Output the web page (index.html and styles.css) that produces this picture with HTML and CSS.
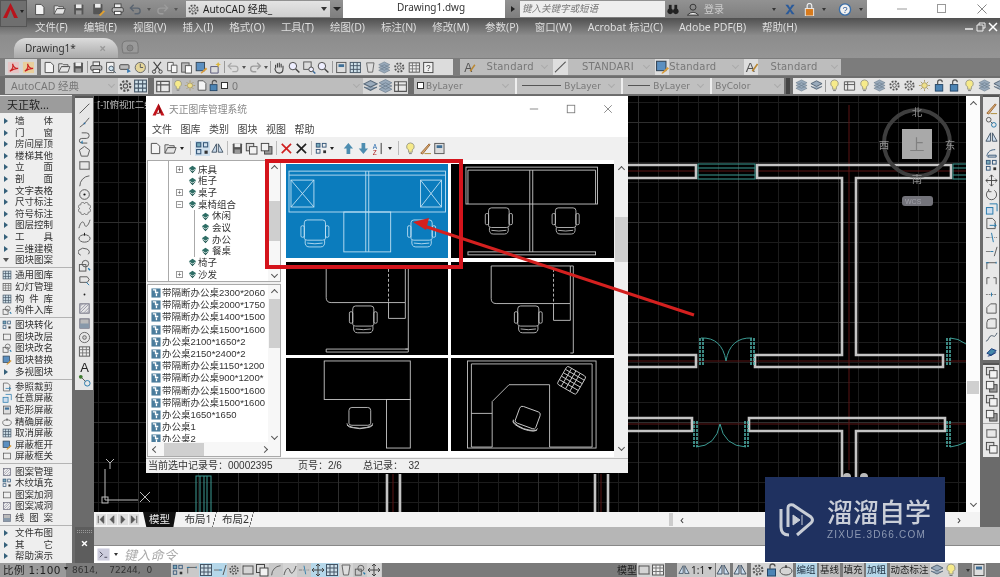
FILE: index.html
```html
<!DOCTYPE html>
<html lang="zh-CN">
<head>
<meta charset="utf-8">
<title>Drawing1.dwg</title>
<link rel="stylesheet" href="styles.css">
</head>
<body>
<svg class="defs" aria-hidden="true">
  <defs>
    <symbol id="new" viewBox="0 0 14 14"><path d="M2.500 1.500h6l3 3v8h-9z" fill="#f4f4f4" stroke="#4a4a4a"/></symbol>
    <symbol id="open" viewBox="0 0 14 14"><path d="M1 12V3h4l1 1h5v2H4l-3 6h10l2-6H4" fill="#e4e4e4" stroke="#555"/></symbol>
    <symbol id="save" viewBox="0 0 14 14"><rect x="2" y="1.500" width="10" height="11" rx="1" fill="#555"/><rect x="4" y="1.500" width="6" height="4" fill="#eee"/><rect x="4" y="8" width="6" height="4.500" fill="#999"/></symbol>
    <symbol id="saveas" viewBox="0 0 14 14"><rect x="1" y="1" width="10" height="11" rx="1" fill="#555"/><rect x="3" y="1" width="6" height="4" fill="#eee"/><path d="M7 13l5-5 2 1-5 5z" fill="#e0a030"/></symbol>
    <symbol id="print" viewBox="0 0 14 14"><rect x="3.500" y="1" width="7" height="4" fill="#eee" stroke="#444"/><rect x="1" y="5" width="12" height="5" rx="1.500" fill="#bbb" stroke="#444"/><rect x="3.500" y="9" width="7" height="3.500" fill="#fff" stroke="#444"/></symbol>
    <symbol id="undo" viewBox="0 0 14 14"><path d="M5 2L1.500 5.500 5 9M2 5.500h7a3 3 0 0 1 0 6H6" fill="none" stroke="#5a6470" stroke-width="1.500"/></symbol>
    <symbol id="redo" viewBox="0 0 14 14"><path d="M9 2l3.500 3.500L9 9m3-3.500H5a3 3 0 0 0 0 6h3" fill="none" stroke="#9c9c9c" stroke-width="1.500"/></symbol>
    <symbol id="undoF" viewBox="0 0 14 14"><path d="M5 2L1.500 5.500 5 9M2 5.500h7a3 3 0 0 1 0 6H6" fill="none" stroke="#a8a8a8" stroke-width="1.300"/></symbol>
    <symbol id="gear" viewBox="0 0 14 14"><circle cx="7" cy="7" r="4.500" fill="none" stroke="#555" stroke-width="2" stroke-dasharray="2 1.500"/><circle cx="7" cy="7" r="2" fill="none" stroke="#555"/></symbol>
    <symbol id="preview" viewBox="0 0 14 14"><path d="M3 1.500h8v11H3z" fill="#f4f4f4" stroke="#555"/><circle cx="8" cy="8" r="2.500" fill="#cfe3ee" stroke="#456"/><path d="M10 10l3 3" stroke="#456"/></symbol>
    <symbol id="plot" viewBox="0 0 14 14"><rect x="1" y="4" width="10" height="5" rx="1" fill="#bbb" stroke="#444"/><path d="M9 8l4 3-4 2z" fill="#3a7ab0"/></symbol>
    <symbol id="publish" viewBox="0 0 14 14"><circle cx="7" cy="7" r="5.500" fill="#e5d69a" stroke="#666"/><path d="M7 3v4h3" fill="none" stroke="#555"/></symbol>
    <symbol id="cut" viewBox="0 0 14 14"><path d="M3 1l7 9M11 1L4 10" stroke="#444" stroke-width="1.200"/><circle cx="3.500" cy="11.500" r="1.800" fill="none" stroke="#444"/><circle cx="10.500" cy="11.500" r="1.800" fill="none" stroke="#444"/></symbol>
    <symbol id="copy" viewBox="0 0 14 14"><path d="M2 1.500h6v9H2z" fill="#f5f5f5" stroke="#555"/><path d="M6 4.500h6v8H6z" fill="#f5f5f5" stroke="#555"/></symbol>
    <symbol id="paste" viewBox="0 0 14 14"><rect x="2" y="2" width="8" height="10" fill="#bbb" stroke="#555"/><rect x="6" y="5" width="6.500" height="8" fill="#fff" stroke="#555"/></symbol>
    <symbol id="match" viewBox="0 0 14 14"><rect x="1.500" y="1.500" width="9" height="9" fill="#5b8fc0" stroke="#345"/><path d="M6 13l6-6 1.500 1.500-6 5z" fill="#d89a38"/></symbol>
    <symbol id="match2" viewBox="0 0 14 14"><path d="M1 6h8v7H1z" fill="none" stroke="#557"/><path d="M9 1l1 2 2 .5-2 1L9 7 8 4.500 6 3.500 8 3z" fill="#dcb63a"/></symbol>
    <symbol id="pan" viewBox="0 0 14 14"><path d="M3 8V4m2 3V2.500m2 4.500V2m2 5V3m2 5V5m0 3c0 3-1 5-4 5S3.500 12 2 8" fill="none" stroke="#444" stroke-width="1.200"/></symbol>
    <symbol id="zoom" viewBox="0 0 14 14"><circle cx="5.500" cy="5.500" r="4" fill="#eef" stroke="#444"/><path d="M8.500 8.500l4 4" stroke="#444" stroke-width="1.500"/></symbol>
    <symbol id="zoomw" viewBox="0 0 14 14"><rect x="1" y="1" width="8" height="8" fill="none" stroke="#555"/><circle cx="9" cy="9" r="2.500" fill="#eef" stroke="#444"/><path d="M11 11l2.500 2.500" stroke="#3a6a9a" stroke-width="1.500"/></symbol>
    <symbol id="palette" viewBox="0 0 14 14"><rect x="2" y="1.500" width="10" height="11" fill="#ddd" stroke="#555"/><rect x="4" y="3.500" width="6" height="3" fill="#3f6f96"/></symbol>
    <symbol id="gridI" viewBox="0 0 14 14"><rect x="1.500" y="1.500" width="11" height="11" fill="#cfe1ea" stroke="#456"/><path d="M5 1.500v11M9 1.500v11M1.500 5h11M1.500 9h11" stroke="#456"/></symbol>
    <symbol id="cup" viewBox="0 0 14 14"><path d="M3 2h8l-1.500 10h-5z" fill="#ddd" stroke="#666"/></symbol>
    <symbol id="help" viewBox="0 0 14 14"><rect x="2" y="1.500" width="10" height="11" fill="#f0f0f0" stroke="#444"/><text x="7" y="11" font-size="9" text-anchor="middle" fill="#333" font-family="Liberation Sans">?</text></symbol>
    <symbol id="layers" viewBox="0 0 14 14"><path d="M1 5l6-3 6 3-6 3zM1 8l6 3 6-3" fill="#9ab" stroke="#567"/></symbol>
    <symbol id="bulb" viewBox="0 0 14 14"><path d="M7 1a4 4 0 0 1 2 7.500V11H5V8.500A4 4 0 0 1 7 1z" fill="#f6ea8a" stroke="#998"/><path d="M5.500 12.500h3" stroke="#777"/></symbol>
    <symbol id="sun" viewBox="0 0 14 14"><circle cx="7" cy="7" r="3" fill="#eee08a" stroke="#a96"/><path d="M7 1v2m0 8v2M1 7h2m8 0h2M3 3l1.500 1.500m5 5L11 11m0-8L9.500 4.500m-5 5L3 11" stroke="#a96"/></symbol>
    <symbol id="lock" viewBox="0 0 14 14"><rect x="2.500" y="6" width="8" height="7" fill="#4c84b4" stroke="#246"/><path d="M5 6V3.500a2.500 2.500 0 0 1 5 0" fill="none" stroke="#555" stroke-width="1.300"/></symbol>
    <symbol id="layer2" viewBox="0 0 14 14"><path d="M1.500 3h11v9h-11z" fill="#e8e8e8" stroke="#555"/><path d="M1.500 6h11M5 3v9" stroke="#555"/></symbol>
    <symbol id="line" viewBox="0 0 14 14"><path d="M2 12L12 2" stroke="#555"/><path d="M12 2h.1M2 12h.1" stroke="#111" stroke-width="2"/></symbol>
    <symbol id="pline" viewBox="0 0 14 14"><path d="M2 12l5-4 5-6" stroke="#555" fill="none"/><circle cx="7" cy="8" r="1" fill="#2a6aa0"/></symbol>
    <symbol id="rev" viewBox="0 0 14 14"><path d="M4 2h5a3 3 0 0 1 0 6H4a2.500 2.500 0 0 0 0 5h6" fill="none" stroke="#555"/><path d="M3 12l2-2v4z" fill="#27a"/></symbol>
    <symbol id="poly" viewBox="0 0 14 14"><path d="M7 1.500l5.500 4-2 6.500h-7l-2-6.500z" fill="none" stroke="#555"/></symbol>
    <symbol id="rect" viewBox="0 0 14 14"><rect x="2" y="3" width="10" height="8" fill="none" stroke="#555"/><path d="M2 3h.1m10 8h.1" stroke="#111" stroke-width="2"/></symbol>
    <symbol id="arc" viewBox="0 0 14 14"><path d="M2 13A11 11 0 0 1 12 2" fill="none" stroke="#555"/><path d="M2 13h.1M12 2h.1" stroke="#111" stroke-width="2"/></symbol>
    <symbol id="circle" viewBox="0 0 14 14"><circle cx="7" cy="7" r="5.200" fill="none" stroke="#555"/><circle cx="7" cy="7" r="1.200" fill="#111"/></symbol>
    <symbol id="cloud" viewBox="0 0 14 14"><path d="M3 3a2 2 0 0 1 4-1 2 2 0 0 1 4 1 2 2 0 0 1 1 4 2 2 0 0 1-1 4 2 2 0 0 1-4 1 2 2 0 0 1-4-1 2 2 0 0 1-1-4 2 2 0 0 1 1-4z" fill="none" stroke="#777"/></symbol>
    <symbol id="spline" viewBox="0 0 14 14"><path d="M1 12C3 4 6 4 7 8s4 2 6-5" fill="none" stroke="#555"/></symbol>
    <symbol id="ell" viewBox="0 0 14 14"><ellipse cx="7" cy="8" rx="6" ry="4" fill="none" stroke="#555"/><path d="M7 2v3" stroke="#111"/></symbol>
    <symbol id="ellarc" viewBox="0 0 14 14"><path d="M3 11A6 4 0 1 1 11 10" fill="none" stroke="#555"/></symbol>
    <symbol id="block" viewBox="0 0 14 14"><rect x="1.500" y="6" width="7" height="7" fill="none" stroke="#555"/><circle cx="8" cy="5" r="3.500" fill="none" stroke="#555"/><path d="M11 10l2 2" stroke="#27a" stroke-width="1.500"/></symbol>
    <symbol id="blockd" viewBox="0 0 14 14"><path d="M2 3h8l2 3-2 3H2z" fill="none" stroke="#555"/><path d="M9 9l3 3" stroke="#27a"/></symbol>
    <symbol id="dot" viewBox="0 0 14 14"><circle cx="7" cy="7" r="1" fill="#222"/></symbol>
    <symbol id="hatch" viewBox="0 0 14 14"><rect x="2" y="2" width="10" height="10" fill="none" stroke="#667"/><path d="M2 5l3-3m-3 7l7-7m-7 10l10-10m-6 10l6-6m-3 6l3-3" stroke="#99a"/></symbol>
    <symbol id="grad" viewBox="0 0 14 14"><rect x="2" y="2" width="10" height="10" fill="#bbb" stroke="#667"/><rect x="2" y="7" width="10" height="5" fill="#89a"/></symbol>
    <symbol id="region" viewBox="0 0 14 14"><circle cx="7" cy="7" r="5.500" fill="none" stroke="#666"/><circle cx="7" cy="7" r="2" fill="#ccc" stroke="#666"/></symbol>
    <symbol id="table" viewBox="0 0 14 14"><rect x="1.500" y="2" width="11" height="10" fill="#eee" stroke="#555"/><path d="M1.500 5h11m-11 3.500h11M5 2v10M9 2v10" stroke="#777"/></symbol>
    <symbol id="mtext" viewBox="0 0 14 14"><text x="7" y="13" font-size="14" text-anchor="middle" fill="#222" font-family="Liberation Sans">A</text></symbol>
    <symbol id="add" viewBox="0 0 14 14"><circle cx="3" cy="3" r="2" fill="#3b7a2a"/><circle cx="10" cy="10" r="3" fill="none" stroke="#27a"/><path d="M4 4l4 4" stroke="#555"/></symbol>
    <symbol id="erase" viewBox="0 0 14 14"><path d="M2 12l9-10 1 1-8 10z" fill="#d8ab75" stroke="#963"/><path d="M6 12.500h7" stroke="#a83"/></symbol>
    <symbol id="copyc" viewBox="0 0 14 14"><circle cx="4" cy="4" r="2.500" fill="none" stroke="#555"/><circle cx="9.500" cy="9.500" r="2.500" fill="none" stroke="#27a"/><path d="M6 6l2 2" stroke="#555"/></symbol>
    <symbol id="mirror" viewBox="0 0 14 14"><path d="M6 2L1 11h5zM8 2l5 9H8z" fill="#cde" stroke="#456"/></symbol>
    <symbol id="offset" viewBox="0 0 14 14"><path d="M2 12C3 7 6 5 11 5M3 13l1-2h8v2z" fill="none" stroke="#357"/></symbol>
    <symbol id="array" viewBox="0 0 14 14"><rect x="1.500" y="1.500" width="4" height="4" fill="#7ab" stroke="#357"/><rect x="8" y="1.500" width="4" height="4" fill="none" stroke="#357"/><rect x="1.500" y="8" width="4" height="4" fill="none" stroke="#357"/><rect x="9" y="9" width="3" height="3" fill="#333"/></symbol>
    <symbol id="move" viewBox="0 0 14 14"><path d="M7 1v12M1 7h12M5 3l2-2 2 2M5 11l2 2 2-2M3 5L1 7l2 2M11 5l2 2-2 2" fill="none" stroke="#444"/></symbol>
    <symbol id="rotate" viewBox="0 0 14 14"><path d="M4 2.500A5.500 5.500 0 1 0 10 2.500" fill="none" stroke="#555"/><path d="M4 1v3h3" fill="none" stroke="#555"/></symbol>
    <symbol id="scale" viewBox="0 0 14 14"><rect x="1.500" y="6" width="7" height="7" fill="#cde" stroke="#27a"/><path d="M5 2h8v8" fill="none" stroke="#27a"/></symbol>
    <symbol id="stretch" viewBox="0 0 14 14"><path d="M2 1.500h6l3 3v8H2z" fill="none" stroke="#555"/><path d="M5 9h7m-2-2l2 2-2 2" fill="none" stroke="#27a"/></symbol>
    <symbol id="trim" viewBox="0 0 14 14"><path d="M1 7h4m1 0h1" stroke="#777"/><path d="M7 2l2 10" stroke="#27a"/><path d="M10 7h3" stroke="#777" stroke-dasharray="1 1"/></symbol>
    <symbol id="extend" viewBox="0 0 14 14"><path d="M1 7h5" stroke="#777"/><path d="M6 7h3" stroke="#27a"/><path d="M10 12l3-10" stroke="#555"/></symbol>
    <symbol id="bp" viewBox="0 0 14 14"><path d="M2 11V4h10" fill="none" stroke="#555"/><path d="M1 4h3m8-1v2" stroke="#27a"/></symbol>
    <symbol id="brk" viewBox="0 0 14 14"><path d="M2 11V4h3m4 0h3v7" fill="none" stroke="#555"/></symbol>
    <symbol id="join" viewBox="0 0 14 14"><path d="M1 7h12" stroke="#777" stroke-dasharray="2 1"/><path d="M7 5v4" stroke="#27a"/></symbol>
    <symbol id="cham" viewBox="0 0 14 14"><path d="M2 12V6l4-4h6v10z" fill="none" stroke="#555"/></symbol>
    <symbol id="fillet" viewBox="0 0 14 14"><path d="M2 12V6a4 4 0 0 1 4-4h6v10z" fill="none" stroke="#555"/></symbol>
    <symbol id="blend" viewBox="0 0 14 14"><path d="M1 11c3 0 3-6 6-6s3 3 6-3" fill="none" stroke="#456"/></symbol>
    <symbol id="explode" viewBox="0 0 14 14"><path d="M2 9l5-5 5 2-5 5z" fill="#48a" stroke="#137"/><path d="M3 12l4-1 5-3" fill="none" stroke="#137"/></symbol>
    <symbol id="order" viewBox="0 0 14 14"><rect x="1.500" y="1.500" width="8" height="8" fill="#ddd" stroke="#444"/><rect x="5" y="5" width="8" height="8" fill="#f2f2f2" stroke="#444"/></symbol>
    <symbol id="order2" viewBox="0 0 14 14"><rect x="5" y="5" width="8" height="8" fill="#999" stroke="#444"/><rect x="1.500" y="1.500" width="8" height="8" fill="#f2f2f2" stroke="#444"/></symbol>
    <symbol id="pdf" viewBox="0 0 14 14"><rect x="1" y="1" width="12" height="12" fill="#e6c4c4"/><path d="M3 11c3-2 4-5 3-8 1 4 3 5 6 5-3 0-6 1-9 3z" fill="none" stroke="#c22" stroke-width="1.300"/></symbol>
    <symbol id="pdf2" viewBox="0 0 14 14"><rect x="1" y="1" width="12" height="12" fill="#e8cf9c"/><path d="M3 11c3-2 4-5 3-8 1 4 3 5 6 5-3 0-6 1-9 3z" fill="none" stroke="#c22" stroke-width="1.300"/></symbol>
    <symbol id="style" viewBox="0 0 14 14"><text x="6" y="12" font-size="13" text-anchor="middle" fill="#555" font-family="Liberation Sans">A</text><path d="M8 11l5-7" stroke="#b83" stroke-width="1.600"/></symbol>
    <symbol id="stack" viewBox="0 0 14 14"><path d="M1 10l6 3 6-3-6-3zM1 7l6 3 6-3-6-3zM1 4l6 3 6-3-6-3z" fill="#9ab" stroke="#678" stroke-width=".6"/></symbol>
    <symbol id="chair" viewBox="0 0 32 30"><path d="M5 4q0-3 3-3h16q3 0 3 3v16q0 2-3 2H8q-3 0-3-2z"/><rect x="1.500" y="7" width="3.500" height="12" rx="1.500"/><rect x="27" y="7" width="3.500" height="12" rx="1.500"/><path d="M6 22q-1 7 4 7h12q5 0 4-7M8 25q8 1.500 16 0"/></symbol>
    <symbol id="chair2" viewBox="0 0 30 26"><path d="M4 4q0-3 3-3h16q3 0 3 3v13q0 2-3 2H7q-3 0-3-2z"/><path d="M2 17q0 3 3 4 10 3 20 0 3-1 3-4M2 19q13 6 26 0"/></symbol>
    <symbol id="tri" viewBox="0 0 24 24"><path d="M12 1L1 23h6l5-11 5 11h6z" fill="#c4141c"/><path d="M12 1l6 17h-5zM9 18h5v2H9z" fill="#7c0c10"/></symbol>
    <symbol id="tI" viewBox="0 0 11 11"><rect x=".5" y=".5" width="10" height="10" fill="#4a7c9c"/><path d="M2 2h3v3h3" fill="none" stroke="#fff" stroke-width="1.500"/><path d="M6 6v3" stroke="#fff" stroke-width="1.500"/></symbol>
    <symbol id="cube" viewBox="0 0 11 11"><path d="M5.500 1l4.500 3-4.500 3L1 4z" fill="#2f6e66"/><path d="M1 5l4.500 5L10 5 5.500 8z" fill="#0f4a44"/></symbol>
  </defs>
</svg>

<div class="app">
  <header class="titlebar">
    <span class="appcaret"></span>
    <div class="qat">
      <svg class="ic w19"><use href="#new"/></svg><svg class="ic w19"><use href="#open"/></svg><svg class="ic w19"><use href="#save"/></svg><svg class="ic w19"><use href="#saveas"/></svg><svg class="ic w19"><use href="#print"/></svg><svg class="ic w15"><use href="#undo"/></svg><span class="caret w13"></span><svg class="ic w15"><use href="#redo"/></svg><span class="caret w13"></span>
    </div>
    <div class="wscombo"><svg class="ic w15"><use href="#gear"/></svg><span>AutoCAD 经典_</span><span class="combo-arrow"></span></div>
    <div class="qatmore"><span class="caret light"></span></div>
    <div class="doctitle">Drawing1.dwg</div>
    <div class="infocenter">
      <span class="tri-r"></span>
      <div class="search">键入关键字或短语</div>
      <svg class="ic w14 bino" viewBox="0 0 14 14"><circle cx="4" cy="9" r="3" fill="#222"/><circle cx="10" cy="9" r="3" fill="#222"/><rect x="2.500" y="2" width="3" height="6" fill="#222"/><rect x="8.500" y="2" width="3" height="6" fill="#222"/></svg>
      <svg class="ic w18" viewBox="0 0 14 14"><circle cx="7" cy="4.500" r="3.200" fill="none" stroke="#333"/><path d="M1 13q6-6 12 0z" fill="#eee" stroke="#333"/></svg>
      <span class="login">登录</span>
      <span class="caret dark"></span>
      <svg class="ic w20" viewBox="0 0 14 14"><path d="M2 2l4 5-4 5h3l2-3 2 3h3L8 7l4-5H9L7 5 5 2z" fill="#2a5a9a"/></svg>
      <svg class="ic w18" viewBox="0 0 14 14"><rect x="3" y="6" width="9" height="8" fill="#d77a1c" stroke="#eee"/><path d="M5 6V3a2.500 2.500 0 0 1 5 0v3" fill="none" stroke="#eee" stroke-width="1.300"/></svg>
      <span class="caret dark gap14"></span>
      <svg class="ic w20" viewBox="0 0 14 14"><circle cx="7" cy="7" r="6" fill="#f0f0f0" stroke="#3a6ea8" stroke-width="1.500"/><text x="7" y="10.500" font-size="10" text-anchor="middle" fill="#2a5a9a" font-family="Liberation Sans">?</text></svg>
      <span class="caret dark"></span>
    </div>
    <div class="winctl">
      <svg class="ctl" viewBox="0 0 12 12"><path d="M1 6h10" stroke="#999"/></svg>
      <svg class="ctl" viewBox="0 0 12 12"><rect x="1.500" y="1.500" width="8" height="8" fill="none" stroke="#999"/></svg>
      <svg class="ctl" viewBox="0 0 12 12"><path d="M1.500 1.500l9 9m0-9l-9 9" stroke="#888"/></svg>
    </div>
  </header>

  <nav class="menubar">
    <span>文件(F)</span><span>编辑(E)</span><span>视图(V)</span><span>插入(I)</span><span>格式(O)</span><span>工具(T)</span><span>绘图(D)</span><span>标注(N)</span><span>修改(M)</span><span>参数(P)</span><span>窗口(W)</span><span>Acrobat 标记(C)</span><span>Adobe PDF(B)</span><span>帮助(H)</span>
    <div class="docctl"><svg class="dc" viewBox="0 0 10 10"><path d="M1 7h8" stroke="#eee" stroke-width="1.500"/></svg><svg class="dc" viewBox="0 0 10 10"><path d="M3 3V1h6v5H7M1 3h6v6H1z" fill="none" stroke="#eee"/></svg><svg class="dc" viewBox="0 0 10 10"><path d="M1 1l8 8m0-8l-8 8" stroke="#fff" stroke-width="1.500"/></svg></div>
  </nav>

  <div class="tabbar">
    <div class="doctab"><span>Drawing1*</span><b>×</b></div>
    <svg class="newtab" viewBox="0 0 20 14"><path d="M3 13Q0 1 6 1h9q4 0 3 12z" fill="#9a9a9a" stroke="#777"/><circle cx="10" cy="8" r="3" fill="#888" stroke="#777"/></svg>
  </div>

  <div class="tb tb1">
    <div class="grp g1"><svg class="ic w15"><use href="#pdf"/></svg><svg class="ic w15"><use href="#pdf2"/></svg></div>
    <div class="grp g2">
      <svg class="ic s"><use href="#new"/></svg><svg class="ic s"><use href="#open"/></svg><svg class="ic s"><use href="#save"/></svg><i class="bar"></i><svg class="ic s"><use href="#print"/></svg><svg class="ic s"><use href="#preview"/></svg><svg class="ic s"><use href="#plot"/></svg><svg class="ic s"><use href="#publish"/></svg><i class="bar"></i><svg class="ic s"><use href="#cut"/></svg><svg class="ic s"><use href="#copy"/></svg><svg class="ic s"><use href="#paste"/></svg><svg class="ic s"><use href="#match"/></svg><svg class="ic s"><use href="#match2"/></svg><i class="bar"></i><svg class="ic s"><use href="#undoF"/></svg><span class="caret s8"></span><svg class="ic s"><use href="#redo"/></svg><span class="caret s8"></span><i class="bar"></i><svg class="ic s"><use href="#pan"/></svg><svg class="ic s"><use href="#zoom"/></svg><svg class="ic s"><use href="#zoomw"/></svg><svg class="ic s"><use href="#zoom"/></svg><i class="bar"></i><svg class="ic s"><use href="#palette"/></svg><svg class="ic s"><use href="#gridI"/></svg><svg class="ic s"><use href="#cup"/></svg><svg class="ic s"><use href="#stack"/></svg><svg class="ic s"><use href="#gear"/></svg><svg class="ic s"><use href="#table"/></svg><svg class="ic s"><use href="#help"/></svg>
    </div>
    <div class="grp g3">
      <svg class="ic s iconpad"><use href="#style"/></svg><span class="std w-a">Standard</span><span class="chev"></span>
      <svg class="ic s icb"><use href="#line"/></svg><span class="std w-b">STANDARI</span><span class="chev"></span>
      <svg class="ic s icb"><use href="#match"/></svg><span class="std w-c">Standard</span><span class="chev"></span>
      <svg class="ic s icb"><use href="#style"/></svg><span class="std w-d">Standard</span><span class="chev"></span>
    </div>
  </div>

  <div class="tb tb2">
    <div class="grp t2a"><span class="wsname">AutoCAD 经典</span><span class="chev"></span><svg class="ic w15 lt"><use href="#gear"/></svg><svg class="ic w15 lt"><use href="#gridI"/></svg></div>
    <div class="grp t2b"><svg class="ic w18 lt"><use href="#layer2"/></svg><svg class="ic w12"><use href="#bulb"/></svg><svg class="ic w12"><use href="#sun"/></svg><svg class="ic w12"><use href="#new"/></svg><svg class="ic w12"><use href="#lock"/></svg><span class="swatch"></span><span class="layername">0</span><span class="chev"></span><svg class="ic w15 lt"><use href="#layers"/></svg><svg class="ic w15 lt"><use href="#stack"/></svg><svg class="ic w15 lt"><use href="#layer2"/></svg></div>
    <div class="grp t2c"><span class="swatch"></span><span class="bylayer first">ByLayer</span><span class="chev"></span><i class="vsep"></i><span class="ltl"></span><span class="bylayer">ByLayer</span><span class="chev"></span><i class="vsep"></i><span class="ltl short"></span><span class="bylayer">ByLayer</span><span class="chev"></span><i class="vsep"></i><span class="bycolor">ByColor</span><span class="chev"></span></div>
    <span class="handle"></span>
    <div class="grp t2d">
      <svg class="ic s15"><use href="#stack"/></svg><svg class="ic s15"><use href="#layers"/></svg><i class="bar"></i><svg class="ic s15"><use href="#bulb"/></svg><svg class="ic s15"><use href="#layer2"/></svg><svg class="ic s15"><use href="#bulb"/></svg><svg class="ic s15"><use href="#stack"/></svg><svg class="ic s15"><use href="#gear"/></svg><svg class="ic s15"><use href="#gear"/></svg><svg class="ic s15"><use href="#sun"/></svg><svg class="ic s15"><use href="#lock"/></svg><svg class="ic s15"><use href="#lock"/></svg><svg class="ic s15"><use href="#bulb"/></svg><svg class="ic s15"><use href="#stack"/></svg><svg class="ic s15"><use href="#layers"/></svg>
    </div>
  </div>

  <main class="main">
    <aside class="tpanel">
      <div class="phead">天正软...</div>
      <div class="pgroup">
        <div class="pi ar"><span class="j">墙体</span></div>
        <div class="pi ar"><span class="j">门窗</span></div>
        <div class="pi ar"><span class="j">房间屋顶</span></div>
        <div class="pi ar"><span class="j">楼梯其他</span></div>
        <div class="pi ar"><span class="j">立面</span></div>
        <div class="pi ar"><span class="j">剖面</span></div>
        <div class="pi ar"><span class="j">文字表格</span></div>
        <div class="pi ar"><span class="j">尺寸标注</span></div>
        <div class="pi ar"><span class="j">符号标注</span></div>
        <div class="pi ar"><span class="j">图层控制</span></div>
        <div class="pi ar"><span class="j">工具</span></div>
        <div class="pi ar"><span class="j">三维建模</span></div>
        <div class="pi dn"><span class="j">图块图案</span></div>
      </div><hr class="sep">
      <div class="pgroup">
        <div class="pi"><svg class="pic"><use href="#gridI"/></svg><span class="j">通用图库</span></div>
        <div class="pi"><svg class="pic"><use href="#table"/></svg><span class="j">幻灯管理</span></div>
        <div class="pi"><svg class="pic"><use href="#gridI"/></svg><span class="j">构件库</span></div>
        <div class="pi"><svg class="pic"><use href="#block"/></svg><span class="j">构件入库</span></div>
      </div><hr class="sep">
      <div class="pgroup">
        <div class="pi"><svg class="pic"><use href="#array"/></svg><span class="j">图块转化</span></div>
        <div class="pi"><svg class="pic"><use href="#rect"/></svg><span class="j">图块改层</span></div>
        <div class="pi"><svg class="pic"><use href="#block"/></svg><span class="j">图块改名</span></div>
        <div class="pi"><svg class="pic"><use href="#match"/></svg><span class="j">图块替换</span></div>
        <div class="pi ar"><span class="j">多视图块</span></div>
      </div><hr class="sep">
      <div class="pgroup">
        <div class="pi"><svg class="pic"><use href="#stretch"/></svg><span class="j">参照裁剪</span></div>
        <div class="pi"><svg class="pic"><use href="#scale"/></svg><span class="j">任意屏蔽</span></div>
        <div class="pi"><svg class="pic"><use href="#palette"/></svg><span class="j">矩形屏蔽</span></div>
        <div class="pi"><svg class="pic"><use href="#ell"/></svg><span class="j">精确屏蔽</span></div>
        <div class="pi"><svg class="pic"><use href="#gridI"/></svg><span class="j">取消屏蔽</span></div>
        <div class="pi"><svg class="pic"><use href="#match"/></svg><span class="j">屏蔽框开</span></div>
        <div class="pi"><svg class="pic"><use href="#rect"/></svg><span class="j">屏蔽框关</span></div>
      </div><hr class="sep">
      <div class="pgroup">
        <div class="pi"><svg class="pic"><use href="#hatch"/></svg><span class="j">图案管理</span></div>
        <div class="pi"><svg class="pic"><use href="#array"/></svg><span class="j">木纹填充</span></div>
        <div class="pi"><svg class="pic"><use href="#rect"/></svg><span class="j">图案加洞</span></div>
        <div class="pi"><svg class="pic"><use href="#hatch"/></svg><span class="j">图案减洞</span></div>
        <div class="pi"><svg class="pic"><use href="#grad"/></svg><span class="j">线图案</span></div>
      </div><hr class="sep">
      <div class="pgroup">
        <div class="pi ar"><span class="j">文件布图</span></div>
        <div class="pi ar"><span class="j">其它</span></div>
        <div class="pi ar"><span class="j">帮助演示</span></div>
      </div>
    </aside>

    <div class="workcol">
      <div class="workrow">
        <div class="ldock">
          <div class="vtb">
            <svg class="vi"><use href="#line"/></svg><svg class="vi"><use href="#pline"/></svg><svg class="vi"><use href="#rev"/></svg><svg class="vi"><use href="#poly"/></svg><svg class="vi"><use href="#rect"/></svg><svg class="vi"><use href="#arc"/></svg><svg class="vi"><use href="#circle"/></svg><svg class="vi"><use href="#cloud"/></svg><svg class="vi"><use href="#spline"/></svg><svg class="vi"><use href="#ell"/></svg><svg class="vi"><use href="#ellarc"/></svg><svg class="vi"><use href="#block"/></svg><svg class="vi"><use href="#blockd"/></svg><svg class="vi"><use href="#dot"/></svg><svg class="vi"><use href="#hatch"/></svg><svg class="vi"><use href="#grad"/></svg><svg class="vi"><use href="#region"/></svg><svg class="vi"><use href="#table"/></svg><svg class="vi"><use href="#mtext"/></svg><svg class="vi"><use href="#add"/></svg>
          </div>
        </div>
        <div class="drawcol">
          <div class="drawrow">
            <svg class="canvas" viewBox="94 96 872 416">
              <defs>
                <pattern id="minor" x="638" y="122" width="20" height="20" patternUnits="userSpaceOnUse"><path d="M.5 0v20M0 .5h20" fill="none" stroke="#1c1c1c"/></pattern>
                <pattern id="major" x="638" y="122" width="100" height="100" patternUnits="userSpaceOnUse"><path d="M.5 0v100M0 .5h100" fill="none" stroke="#2e2e2e"/></pattern>
              </defs>
              <rect x="94" y="96" width="872" height="416" fill="#000"/>
              <rect x="94" y="96" width="872" height="416" fill="url(#minor)"/>
              <rect x="94" y="96" width="872" height="416" fill="url(#major)"/>
              <text class="vplabel" x="97" y="108">[-][俯视][二维线框]</text>
              <path class="axis" d="M849 105V470M628 171H966M628 361H966M628 424H966M393 474V512M601 474V512"/>
              <g class="wall">
                <path d="M628 165H696V178H628"/>
                <path d="M951 165H757V178H842V355H755V367H943V355H856V178H951Z"/>
                <path d="M628 355H696V367H628"/>
                <path d="M628 418H692V431H628"/>
                <path d="M842 480V431H749V418H945V431H856V480"/>
                <path d="M387 474V512M400 474V512M595 474V512M608 474V512"/>
              </g>
              <circle class="bump" cx="847" cy="477" r="4"/><circle class="bump" cx="864" cy="477" r="4"/>
              <g class="teal">
                <rect x="698" y="164" width="57" height="15"/><path d="M698 168H755M698 175H755"/>
                <rect x="953" y="164" width="14" height="15"/><path d="M953 168H967M953 175H967"/>
                <rect x="196" y="476" width="15" height="40"/><path d="M200 476V512M204 476V512M207 476V512"/>
                <path class="door" d="M700 338V365M703 338V365M751 338V365M754 338V365M947 338V365M950 338V365M694 421V447M697 421V447M745 421V447M748 421V447M947 421V447M950 421V447"/>
                <path d="M701 338Q722 337 726 361Q730 337 752 338M950 338Q958 338 966 344M696 447Q716 446 720 424Q724 446 746 447M950 447Q958 446 966 442"/>
              </g>
              <g class="ucs"><path d="M105 469V500H138"/><rect x="102" y="497" width="6" height="6"/><path d="M140 492l10 10m0-10l-10 10M106 459l4 4 4-4M110 463v6"/></g>
              <circle class="vcring" cx="917" cy="143" r="33"/>
              <rect class="vcbox" x="902" y="129" width="30" height="30"/>
              <text class="vctop" x="917" y="150">上</text>
              <text class="vcdir" x="917" y="116">北</text><text class="vcdir" x="917" y="183">南</text><text class="vcdir" x="950" y="149">东</text><text class="vcdir" x="884" y="149">西</text>
              <rect class="wcs" x="902" y="196" width="31" height="10" rx="3"/><text class="wcst" x="905" y="204">WCS</text>
            </svg>
            <div class="vscroll"><span class="arr up"></span><span class="thumb"></span><span class="arr down"></span></div>
          </div>
          <div class="hscroll">
            <div class="navs"><svg viewBox="0 0 10 12"><path d="M2 2v8M8 2L4 6l4 4z" fill="#555" stroke="#555"/></svg><svg viewBox="0 0 10 12"><path d="M7 2L3 6l4 4z" fill="#555" stroke="#555"/></svg><svg viewBox="0 0 10 12"><path d="M3 2l4 4-4 4z" fill="#555" stroke="#555"/></svg><svg viewBox="0 0 10 12"><path d="M8 2v8M2 2l4 4-4 4z" fill="#555" stroke="#555"/></svg></div>
            <div class="ltab on">模型</div><div class="ltab l1">布局1</div><div class="ltab l2">布局2</div>
            <div class="hrest"><span class="hthumb"></span><span class="harr">‹</span><span class="harr end">›</span></div>
          </div>
        </div>
        <div class="rdock">
          <div class="vtb rt">
            <svg class="vi"><use href="#erase"/></svg><svg class="vi"><use href="#copyc"/></svg><svg class="vi"><use href="#mirror"/></svg><svg class="vi"><use href="#offset"/></svg><svg class="vi"><use href="#array"/></svg><svg class="vi"><use href="#move"/></svg><svg class="vi"><use href="#rotate"/></svg><svg class="vi"><use href="#scale"/></svg><svg class="vi"><use href="#stretch"/></svg><svg class="vi"><use href="#trim"/></svg><svg class="vi"><use href="#extend"/></svg><svg class="vi"><use href="#bp"/></svg><svg class="vi"><use href="#brk"/></svg><svg class="vi"><use href="#join"/></svg><svg class="vi"><use href="#cham"/></svg><svg class="vi"><use href="#fillet"/></svg><svg class="vi"><use href="#blend"/></svg><svg class="vi"><use href="#explode"/></svg>
          </div>
          <div class="vtb rt2">
            <svg class="vi"><use href="#order"/></svg><svg class="vi"><use href="#order2"/></svg><svg class="vi"><use href="#order"/></svg><svg class="vi"><use href="#order2"/></svg>
          </div>
          <div class="vtb rt3">
            <svg class="vi"><use href="#rect"/></svg><svg class="vi"><use href="#order"/></svg>
          </div>
        </div>
      </div>
      <div class="cmd">
        <div class="cmdhandle"><span class="grip"></span><b>×</b></div>
        <div class="cmdbody"><div class="cmdhist"></div><div class="cmdline"><svg class="cmdi" viewBox="0 0 14 14"><rect x=".5" y=".5" width="13" height="13" fill="#ccd"/><path d="M3 4l3 3-3 3m5 0h3" fill="none" stroke="#445"/></svg><span class="caret dark"></span><span class="cmdtext">键入命令</span></div></div>
      </div>
    </div>
  </main>

  <footer class="status">
    <div class="scale">比例 1:100<span class="caret sc"></span></div>
    <div class="coords">8614,&nbsp;&nbsp;&nbsp;&nbsp;72244,&nbsp;&nbsp;0</div>
    <div class="togs">
      <svg class="st"><use href="#array"/></svg><svg class="st"><use href="#bp"/></svg><svg class="st on"><use href="#gridI"/></svg><svg class="st on"><use href="#extend"/></svg><svg class="st"><use href="#gear"/></svg><svg class="st lite"><use href="#rect"/></svg><svg class="st lite"><use href="#order"/></svg><svg class="st"><use href="#arc"/></svg><svg class="st lite"><use href="#spline"/></svg><svg class="st"><use href="#trim"/></svg><svg class="st on"><use href="#move"/></svg><svg class="st on"><use href="#gridI"/></svg><svg class="st lite"><use href="#cup"/></svg><svg class="st"><use href="#block"/></svg><svg class="st lite"><use href="#move"/></svg>
    </div>
    <div class="srt">
      <span class="lab">模型</span><svg class="st lite"><use href="#rect"/></svg><svg class="st lite"><use href="#table"/></svg>
      <span class="annot"><svg class="st ann"><use href="#mirror"/></svg>1:1<span class="caret sc"></span></span>
      <svg class="st lite"><use href="#mirror"/></svg><svg class="st lite m3"><use href="#mirror"/></svg>
      <svg class="st lite gapl"><use href="#gear"/></svg><svg class="st lite"><use href="#lock"/></svg><svg class="st lite"><use href="#ell"/></svg>
      <span class="tg act">编组</span><span class="tg">基线</span><span class="tg">填充</span><span class="tg act">加粗</span><span class="tg">动态标注</span>
      <svg class="st lite"><use href="#layers"/></svg><svg class="st lite"><use href="#bulb"/></svg><span class="caret dark sm"></span><svg class="st lite"><use href="#palette"/></svg>
    </div>
  </footer>

  <!-- floating dialog window -->
  <section class="dlg">
    <div class="dtitle"><svg class="dlogo"><use href="#tri"/></svg><span>天正图库管理系统</span>
      <div class="dctl"><svg viewBox="0 0 12 12"><path d="M1 6h10" stroke="#777"/></svg><svg viewBox="0 0 12 12"><rect x="1.500" y="1.500" width="9" height="9" fill="none" stroke="#777"/></svg><svg viewBox="0 0 12 12"><path d="M1.500 1.500l9 9m0-9l-9 9" stroke="#777"/></svg></div>
    </div>
    <div class="dmenu"><span>文件</span><span>图库</span><span>类别</span><span>图块</span><span>视图</span><span>帮助</span></div>
    <div class="dtool">
      <svg class="ic d16"><use href="#new"/></svg><svg class="ic d13"><use href="#open"/></svg><span class="caret dk"></span>
      <i class="dsep a"></i><svg class="ic d15 hl"><use href="#array"/></svg><svg class="ic d15"><use href="#mirror"/></svg>
      <i class="dsep"></i><svg class="ic d15"><use href="#save"/></svg><svg class="ic d15"><use href="#order"/></svg><svg class="ic d15"><use href="#order2"/></svg>
      <i class="dsep"></i><svg class="ic d15" viewBox="0 0 14 14"><path d="M2 2l10 10m0-10L2 12" stroke="#d02020" stroke-width="1.800"/></svg><svg class="ic d15" viewBox="0 0 14 14"><path d="M2 2l10 10m0-10L2 12" stroke="#222" stroke-width="1.800"/></svg>
      <i class="dsep"></i><svg class="ic d15"><use href="#array"/></svg><span class="caret dk gap5"></span><svg class="ic d15" viewBox="0 0 14 14"><path d="M7 1l5 6H9v6H5V7H2z" fill="#4d8db0"/></svg><svg class="ic d15" viewBox="0 0 14 14"><path d="M7 13l5-6H9V1H5v6H2z" fill="#4d8db0"/></svg><svg class="ic d15" viewBox="0 0 14 14"><text x="1" y="7" font-size="7" fill="#26a" font-family="Liberation Sans">A</text><text x="1" y="14" font-size="7" fill="#a22" font-family="Liberation Sans">Z</text><path d="M10 1v12" stroke="#333"/></svg><span class="caret dk"></span>
      <i class="dsep a"></i><svg class="ic d15"><use href="#bulb"/></svg><svg class="ic d15"><use href="#erase"/></svg><svg class="ic d15"><use href="#palette"/></svg>
    </div>
    <div class="dbody">
      <div class="dleft">
        <div class="tree">
          <div class="treerows">
            <div class="tr"><span class="pm">+</span><svg class="tc"><use href="#cube"/></svg>床具</div>
            <div class="tr"><span class="pm none"></span><svg class="tc"><use href="#cube"/></svg>柜子</div>
            <div class="tr"><span class="pm">+</span><svg class="tc"><use href="#cube"/></svg>桌子</div>
            <div class="tr"><span class="pm">−</span><svg class="tc"><use href="#cube"/></svg>桌椅组合</div>
            <div class="tr l2"><svg class="tc"><use href="#cube"/></svg>休闲</div>
            <div class="tr l2"><svg class="tc"><use href="#cube"/></svg>会议</div>
            <div class="tr l2"><svg class="tc"><use href="#cube"/></svg>办公</div>
            <div class="tr l2"><svg class="tc"><use href="#cube"/></svg>餐桌</div>
            <div class="tr"><span class="pm none"></span><svg class="tc"><use href="#cube"/></svg>椅子</div>
            <div class="tr"><span class="pm">+</span><svg class="tc"><use href="#cube"/></svg>沙发</div>
          </div>
          <div class="dvs t"><span class="arr up"></span><span class="thumb"></span><span class="arr down"></span></div>
        </div>
        <div class="list">
          <div class="lbody">
            <div class="lrows">
              <div class="lr"><svg class="li"><use href="#tI"/></svg>带隔断办公桌2300*2060</div>
              <div class="lr"><svg class="li"><use href="#tI"/></svg>带隔断办公桌2000*1750</div>
              <div class="lr"><svg class="li"><use href="#tI"/></svg>带隔断办公桌1400*1500</div>
              <div class="lr"><svg class="li"><use href="#tI"/></svg>带隔断办公桌1500*1600</div>
              <div class="lr"><svg class="li"><use href="#tI"/></svg>办公桌2100*1650*2</div>
              <div class="lr"><svg class="li"><use href="#tI"/></svg>办公桌2150*2400*2</div>
              <div class="lr"><svg class="li"><use href="#tI"/></svg>带隔断办公桌1150*1200</div>
              <div class="lr"><svg class="li"><use href="#tI"/></svg>带隔断办公桌900*1200*</div>
              <div class="lr"><svg class="li"><use href="#tI"/></svg>带隔断办公桌1500*1600</div>
              <div class="lr"><svg class="li"><use href="#tI"/></svg>带隔断办公桌1500*1600</div>
              <div class="lr"><svg class="li"><use href="#tI"/></svg>办公桌1650*1650</div>
              <div class="lr"><svg class="li"><use href="#tI"/></svg>办公桌1</div>
              <div class="lr"><svg class="li"><use href="#tI"/></svg>办公桌2</div>
            </div>
            <div class="dvs l"><span class="arr up"></span><span class="thumb"></span><span class="arr down"></span></div>
          </div>
          <div class="lhs"><span class="arr left"></span><span class="hth"></span><span class="arr right"></span></div>
        </div>
      </div>
      <div class="dright">
        <div class="cells">
          <svg class="cell sel" viewBox="0 0 163 94">
            <rect x="3" y="7" width="157" height="41"/><path d="M3 11H160M80 7V88M83 7V88"/><rect x="58" y="48" width="47" height="40"/>
            <rect x="5" y="16" width="23" height="27"/><path d="M5 16l23 27m0-27L5 43"/><rect x="135" y="16" width="21" height="27"/><path d="M135 16l21 27m0-27l-21 27"/>
            <use href="#chair" x="11" y="55" width="36" height="29"/><use href="#chair" x="117" y="55" width="38" height="29"/>
          </svg>
          <svg class="cell" viewBox="0 0 163 94">
            <rect x="15" y="3" width="132" height="37"/><path d="M17 40V6H145V40M79 6V88M82 6V88"/><rect x="17" y="88" width="128" height="3"/>
            <use href="#chair" x="33" y="42" width="30" height="30"/><use href="#chair" x="100" y="42" width="30" height="30"/>
          </svg>
          <svg class="cell" viewBox="0 0 163 94">
            <path d="M40 4H120V41H45Q40 41 40 36ZM120 4h3V88H120M120 41V57H103V41"/><path d="M103 7V41" stroke-dasharray="3 2"/><path d="M40 88H123V91H40Z"/>
            <use href="#chair" x="62" y="43" width="31" height="30"/>
          </svg>
          <svg class="cell" viewBox="0 0 163 94">
            <path d="M40 4H120V42H45Q40 42 40 37ZM120 4h3V92H120M120 42V59H103V42"/><path d="M103 7V42" stroke-dasharray="3 2"/>
            <use href="#chair" x="62" y="43" width="31" height="30"/>
          </svg>
          <svg class="cell" viewBox="0 0 163 94">
            <rect x="38" y="3" width="87" height="39"/><rect x="101" y="42" width="24" height="49"/>
            <use href="#chair2" x="59" y="49" width="30" height="26"/>
          </svg>
          <svg class="cell" viewBox="0 0 163 94">
            <rect x="16" y="3" width="130" height="88"/><path d="M41 90H20V6H142V90H99V27H58L41 44ZM20 56H41"/>
            <g transform="rotate(20 76 63)"><use href="#chair2" x="61" y="49" width="30" height="28"/></g>
            <g transform="rotate(30 121 23)"><rect x="110" y="12" width="22" height="21" rx="2"/><path d="M110 16h22M110 20h22M110 24h22M110 28h22M115 12v21M120 12v21M125 12v21"/></g>
          </svg>
        </div>
        <div class="dvs p"><span class="arr up"></span><span class="thumb"></span><span class="arr down"></span></div>
      </div>
    </div>
    <div class="dstatus"><span class="rec">当前选中记录号：00002395</span><span class="pg">页号：2/6</span><span class="tot">总记录：&nbsp; 32</span></div>
  </section>

  <!-- red annotation over the screenshot -->
  <div class="redbox"></div>
  <svg class="redarrow" viewBox="0 0 1000 577"><path d="M694 315L424 226" stroke="#d4201f" stroke-width="3"/><path d="M413 222l16-4-3 12z" fill="#d4201f"/></svg>

  <!-- watermark -->
  <aside class="wm">
    <svg class="wmlogo" viewBox="0 0 36 36"><path d="M2 7v18q0 8 8 8" fill="none" stroke="#c8cdd6" stroke-width="3"/><path d="M9 25V6q0-4 5-3l18 12q3 3 0 6L18 33" fill="none" stroke="#c8cdd6" stroke-width="3"/><path d="M14 13l7 5-7 5zM23 13v10" fill="#c8cdd6" stroke="#c8cdd6"/></svg>
    <div class="wmtext"><div class="wmcn">溜溜自学</div><div class="wmen">ZIXUE.3D66.COM</div></div>
  </aside>
</div>
</body>
</html>
```
FILE: styles.css
```css
* { box-sizing: border-box; }
html, body { margin: 0; padding: 0; }
body { width: 1000px; height: 577px; overflow: hidden; font-family: "Noto Sans", "Noto Sans CJK SC", sans-serif; }
.defs { width: 0; height: 0; position: absolute; }
.app { position: relative; width: 1000px; height: 577px; display: flex; flex-direction: column; background: #6b6b6b; overflow: hidden; filter: blur(.3px); }
.ic { display: block; height: 13px; flex: none; }
.w12 { width: 12px; } .w13 { width: 13px; } .w14 { width: 14px; } .w15 { width: 15px; } .w18 { width: 18px; } .w19 { width: 19.5px; } .w20 { width: 20px; }
.caret { flex: none; width: 0; height: 0; border: 2.500px solid transparent; border-top: 3px solid #555; border-bottom: 0; margin: 0 4px; display: block; }
.caret.light { border-top-color: #222; }
.caret.dark { border-top-color: #333; }

/* title bar */
.titlebar { height: 18px; flex: none; display: flex; align-items: stretch; background: linear-gradient(#929292, #7e7e7e); padding-left: 30px; }
.titlebar::before { content: ""; position: absolute; left: 0; top: 0; width: 25px; height: 25px; background: #6f6f6f; border: 1px solid #555; }
.titlebar::after { content: ""; position: absolute; left: 3px; top: 3px; width: 15px; height: 15px; background: #b8141c; clip-path: polygon(50% 0, 100% 100%, 74% 100%, 50% 44%, 26% 100%, 0 100%); }
.appcaret { position: absolute; left: 20px; top: 10px; width: 0; height: 0; border: 2px solid transparent; border-top: 3px solid #222; border-bottom: 0; z-index: 1; }
.qat { display: flex; align-items: center; width: 156px; }
.wscombo { width: 144px; height: 16px; margin-top: 1px; background: linear-gradient(#e4e4e4, #cfcfcf); display: flex; align-items: center; font-size: 10px; color: #222; line-height: 16px; }
.wscombo span:nth-child(2) { flex: 1; padding-left: 2px; }
.combo-arrow { width: 0; height: 0; border: 3px solid transparent; border-top: 4px solid #333; border-bottom: 0; margin-right: 3px; }
.qatmore { width: 13px; display: flex; align-items: center; justify-content: center; }
.qatmore .caret { margin: 0; border-width: 4px; border-bottom: 0; }
.doctitle { width: 162px; background: #fff; text-align: center; font-size: 10px; line-height: 15px; color: #333; padding-left: 14px; }
.infocenter { width: 362px; display: flex; align-items: center; }
.tri-r { width: 0; height: 0; border: 3px solid transparent; border-left: 4px solid #222; border-right: 0; margin: 0 5px 0 6px; }
.search { width: 145px; height: 16px; background: #eee; font-size: 9.500px; font-style: italic; color: #777; line-height: 16px; padding-left: 2px; }
.bino { margin: 0 4px 0 1px; }
.login { width: 22px; font-size: 10px; color: #ccc; line-height: 14px; margin-right: 42px; margin-left: 2px; }
.caret.gap14 { margin-right: 9px; }
.winctl { flex: 1; background: #fff; display: flex; align-items: center; padding-left: 29px; gap: 28px; }
.ctl { width: 12px; height: 12px; display: block; }

/* menu */
.menubar { height: 17px; flex: none; background: linear-gradient(#505050, #8a8a8a); display: flex; align-items: center; gap: 16px; padding-left: 35px; font-size: 10.500px; line-height: 14px; color: #dedede; white-space: nowrap; }
.docctl { margin-left: auto; display: flex; gap: 2px; padding-right: 2px; }
.dc { width: 10px; height: 10px; display: block; }

/* tabs */
.tabbar { height: 23px; flex: none; background: linear-gradient(#8c8c8c, #959595); display: flex; align-items: flex-end; padding-left: 14px; }
.doctab { width: 104px; height: 20px; background: linear-gradient(#dcdcdc, #a9a9a9); border-radius: 12px 14px 0 0; display: flex; align-items: center; justify-content: space-between; padding: 0 12px 0 11px; font-size: 10px; color: #333; }
.doctab b { color: #999; font-size: 12px; font-weight: 700; }
.newtab { width: 20px; height: 14px; margin: 0 0 4px 2px; display: block; }

/* toolbars */
.tb { flex: none; display: flex; align-items: center; background: #6e6e6e; }
.tb1 { height: 18px; padding-left: 5px; gap: 4px; background: #7c7c7c; }
.tb2 { height: 19px; padding-left: 5px; gap: 6px; }
.grp { display: flex; align-items: center; background: #d5d5d5; height: 16px; }
.g1 { width: 32px; padding-left: 1px; }
.g2 { width: 412px; padding-left: 1px; background: #dcdcdc; margin-right: 3px; }
.s { width: 14.600px; }
.caret.s8 { margin: 0 1.500px; }
.bar { width: 1px; height: 12px; background: #999; flex: none; margin: 0 1px; }
.g3 { width: 381px; height: 16px; background: #bdbdbd; flex: none; }
.iconpad { margin-left: 2px; margin-right: 10px; }
.std { line-height: 14px; color: #777; font-family: "DejaVu Sans", sans-serif; font-size: 10px; letter-spacing: .2px; }
.w-a { width: 54px; } .w-b { width: 60px; margin-left: 14px; } .w-c { width: 62px; } .w-d { width: 60px; margin-left: 12px; }
.chev { width: 5px; height: 5px; flex: none; border-right: 1px solid #aaa; border-bottom: 1px solid #aaa; transform: rotate(45deg); margin: -3px 4px 0; display: block; }
.icb { background: #dedede; height: 16px; margin-left: 2px; }
.t2a { width: 143px; background: #c0c0c0; padding-left: 6px; }
.wsname { font-size: 10.500px; line-height: 14px; color: #777; width: 101px; }
.lt { background: #d8d8d8; height: 16px; }
.t2b { width: 254px; padding-left: 0; background: #bdbdbd; }
.swatch { width: 7px; height: 7px; border: 1px solid #333; background: #fff; flex: none; margin: 0 2px 0 1px; display: block; }
.layername { font-size: 10.500px; line-height: 14px; color: #777; padding-left: 2px; width: 130px; }
.t2c { width: 370px; background: #c0c0c0; padding-left: 2px; font-family: "DejaVu Sans", sans-serif; }
.bylayer, .bycolor { font-size: 9px; line-height: 14px; color: #777; }
.t2c > .bylayer { width: 42px; }
.t2c > .bylayer.first { width: 75px; }
.t2c > .chev + .vsep { margin-left: 3px; }
.vsep { width: 2px; height: 16px; background: #eee; flex: none; margin-right: 2px; }
.ltl { width: 39px; height: 1px; background: #555; flex: none; margin: 0 3px; }
.ltl.short { width: 22px; }
.bycolor { width: 58px; padding-left: 1px; }
.handle { width: 4px; height: 16px; background: #444; margin-left: -4px; flex: none; }
.t2d { flex: 1; background: #e4e4e4; margin-left: -3px; padding-left: 1px; }
.s15 { width: 15px; }

/* main */
.main { flex: 1; min-height: 0; display: flex; }
.tpanel { width: 72px; flex: none; background: #eeeeee; color: #333; font-size: 9.500px; line-height: 11.600px; }
.phead { height: 17px; margin-top: 1px; background: #9c9c9c; font-size: 11px; line-height: 17px; padding-left: 7px; color: #222; margin-bottom: 2px; }
.pi { height: 11.600px; display: flex; align-items: center; position: relative; padding-left: 15px; white-space: nowrap; }
.j { display: block; width: 38px; text-align: justify; text-align-last: justify; }
.ar::before { content: ""; position: absolute; left: 4px; top: 3px; border: 3px solid transparent; border-left: 4px solid #35607a; border-right: 0; }
.dn::before { content: ""; position: absolute; left: 3px; top: 4px; border: 3px solid transparent; border-top: 4px solid #555; border-bottom: 0; }
.pic { position: absolute; left: 2px; top: 1px; width: 10px; height: 10px; }
.sep { height: 1px; margin: 1.300px 0; border: 0; background: #b4b4b4; }

.workcol { flex: 1; min-width: 0; display: flex; flex-direction: column; }
.workrow { height: 432px; display: flex; }
.ldock { width: 22px; flex: none; padding: 1px 1px 0 3px; }
.vtb { background: #e6e6e6; border-top: 2px solid #555; padding: 4px 0 2px; display: flex; flex-direction: column; align-items: center; }
.vi { width: 13px; height: 13px; flex: none; margin-bottom: 1.320px; display: block; }
.drawcol { flex: none; width: 886px; display: flex; flex-direction: column; }
.drawrow { display: flex; margin-top: 1px; height: 416px; }
.canvas { width: 872px; height: 416px; display: block; flex: none; }
.vscroll { width: 14px; background: #fcfcfc; display: flex; flex-direction: column; align-items: center; height: 417px; }
.arr { display: block; width: 5px; height: 5px; flex: none; border-left: 1px solid #555; border-top: 1px solid #555; }
.arr.up { transform: rotate(45deg); }
.arr.down { transform: rotate(225deg); }
.arr.left { transform: rotate(-45deg); }
.arr.right { transform: rotate(135deg); }
.vscroll .up { margin-top: 6px; }
.vscroll .thumb { width: 12px; height: 13px; background: #cfcfcf; margin-top: 274px; }
.vscroll .down { margin-top: 107px; }
.rdock { width: 20px; flex: none; padding: 0 1px 0 3px; }
.vtb.rt { padding: 5px 0 0; }
.vtb.rt, .vtb.rt2, .vtb.rt3 { background: #e8e8e8; }
.vtb.rt2 { padding: 1px 0 0; margin-top: 3px; }
.vtb.rt3 { padding: 3px 0 1px; border-top: 1px solid #aaa; }

.canvas .vplabel { font-size: 9.500px; fill: #bbb; }
.axis { fill: none; stroke: #5a1414; stroke-width: 1; }
.wall path { fill: none; stroke: #c4c4c4; stroke-width: 2.600; }
.bump { fill: #bbb; }
.teal rect, .teal path { fill: none; stroke: #3c9c94; stroke-width: 1; }
.teal .door { stroke: #4fb3aa; stroke-width: 1.500; stroke-dasharray: 3 1; }
.ucs path, .ucs rect { fill: none; stroke: #bbb; stroke-width: 1; }
.vcring { fill: none; stroke: #3e3e3e; stroke-width: 4; }
.vcbox { fill: #a9a9a9; }
.vctop { font-size: 15px; fill: #808080; text-anchor: middle; }
.vcdir { font-size: 10.500px; fill: #909090; text-anchor: middle; }
.wcs { fill: #73737a; }
.wcst { font-size: 7px; fill: #a0a0a8; font-family: "Liberation Sans", sans-serif; }

/* layout tabs */
.hscroll { height: 15px; background: #f3f3f3; display: flex; align-items: stretch; }
.navs { display: flex; width: 49px; padding: 2px 0 2px 2px; gap: 1px; flex: none; }
.navs svg { width: 10px; height: 11px; background: #dedede; display: block; }
.ltab { font-size: 10.500px; line-height: 15px; color: #333; width: 33px; text-align: center; flex: none; background: linear-gradient(105deg, transparent 45%, #666 47%, #666 53%, transparent 55%) right center / 5px 100% no-repeat; }
.ltab.on { background: #111; color: #eee; clip-path: polygon(0 0, 100% 0, 92% 100%, 10% 100%); }
.ltab.l1 { width: 41px; padding-left: 3px; }
.ltab.l2 { width: 37px; }
.hrest { flex: 1; display: flex; align-items: center; padding-left: 415px; font-size: 13px; line-height: 13px; color: #444; }
.hthumb { width: 4px; height: 13px; background: #ccc; }
.harr { margin-left: 7px; }
.harr.end { margin-left: 273px; }

/* command */
.cmd { flex: 1; display: flex; min-height: 0; }
.cmdhandle { margin-left: 3px; width: 19px; flex: none; background: #5d5d5d; color: #fff; display: flex; flex-direction: column; align-items: center; font-size: 13px; line-height: 14px; }
.grip { width: 15px; height: 3px; border-top: 1px dotted #999; border-bottom: 1px dotted #999; margin: 3px 0; }
.cmdbody { flex: 1; display: flex; flex-direction: column; }
.cmdhist { height: 19px; background: #b6b6b6; border-bottom: 1px solid #888; }
.cmdline { flex: 1; background: #fff; display: flex; align-items: center; padding-left: 3px; }
.cmdi { width: 13px; height: 13px; display: block; }
.cmdline .caret { margin: 0 6px 0 4px; }
.cmdtext { font-size: 13px; line-height: 16px; font-style: italic; color: #aaa; letter-spacing: .3px; }

/* status */
.status { height: 14px; flex: none; background: #7b7b7b; display: flex; align-items: center; font-size: 10px; line-height: 13px; color: #222; overflow: hidden; }
.scale { width: 66px; height: 14px; background: #9a9a9a; padding-left: 3px; display: flex; align-items: center; white-space: nowrap; font-size: 10.500px; letter-spacing: .4px; font-family: "DejaVu Sans", "Noto Sans CJK SC", sans-serif; }
.caret.sc { margin: 0 0 4px 3px; border-top-color: #111; }
.coords { width: 105px; padding-left: 6px; white-space: nowrap; color: #333; font-family: "DejaVu Sans", sans-serif; font-size: 9px; }
.togs { width: 211px; display: flex; background: #c9c9c9; height: 14px; align-items: center; flex: none; }
.st { width: 14px; height: 12px; display: block; flex: none; }
.st.on { background: #b5d7e9; height: 14px; }
.st.lite { background: #d4d4d4; height: 14px; }
.srt { flex: 1; display: flex; align-items: center; padding-left: 235px; white-space: nowrap; }
.lab { width: 20px; color: #222; }
.annot { display: flex; align-items: center; width: 38px; margin: 0 1px 0 12px; background: #c9c9c9; height: 14px; font-size: 10px; }
.m3 { margin-left: 3px; }
.gapl { margin-left: 4px; }
.tg { font-size: 9.500px; padding: 0 1px; height: 14px; line-height: 14px; background: #bcbcbc; margin-left: 2.500px; }
.tg.act { background: #b5d7e9; color: #234; }
.caret.sm { margin: 0 2px 0 8px; }

/* dialog window */
.dlg { position: absolute; left: 146px; top: 96px; width: 482px; height: 377px; background: #f0f0f0; color: #333; display: flex; flex-direction: column; font-size: 10px; }
.dtitle { height: 26px; background: #fff; display: flex; align-items: center; padding-left: 6px; font-size: 9.750px; color: #8a8a8a; flex: none; }
.dlogo { width: 13px; height: 13px; margin-right: 4px; display: block; }
.dctl { margin-left: auto; display: flex; gap: 27px; padding-right: 15px; }
.dctl svg { width: 10px; height: 10px; display: block; }
.dmenu { height: 15px; background: #fff; display: flex; gap: 8.500px; padding-left: 6px; font-size: 10px; line-height: 15px; color: #444; flex: none; }
.dtool { height: 22px; display: flex; align-items: center; padding-left: 2px; flex: none; }
.d16 { width: 15px; } .d13 { width: 15px; } .d15 { width: 14.800px; }
.caret.dk { border-top-color: #222; margin: 0 2px; }
.caret.gap5 { margin-right: 7px; }
.dsep { width: 1px; height: 14px; background: #bbb; margin: 0 2px; flex: none; }
.dsep.a { margin: 0 4px; }
.hl { background: #cfe0ee; height: 15px; }
.dbody { height: 298px; display: flex; padding: 1px 0 0 1px; flex: none; }
.dleft { width: 134px; flex: none; display: flex; flex-direction: column; gap: 2px; }
.tree { height: 122px; background: #fff; border: 1px solid #aaa; display: flex; overflow: hidden; }
.treerows { flex: 1; padding: 2.500px 0 0 28px; min-width: 0; position: relative; background: linear-gradient(#aaa, #aaa) 20px 0 / 1px 100% no-repeat; }
.tr { height: 11.700px; display: flex; align-items: center; font-size: 9.500px; line-height: 11.700px; white-space: nowrap; color: #333; }
.tr.l2 { padding-left: 25px; background: linear-gradient(#aaa, #aaa) 18px 0 / 1px 100% no-repeat; }
.pm { width: 7px; height: 7px; border: 1px solid #999; font-size: 7px; line-height: 5px; text-align: center; color: #444; margin-right: 5px; flex: none; background: #fff; overflow: hidden; }
.pm.none { border: 0; background: none; }
.tc { width: 9px; height: 9px; margin-right: 1px; display: block; flex: none; }
.tr.l2 .tc { margin-right: 2px; }
.dvs { width: 12px; flex: none; display: flex; flex-direction: column; align-items: center; background: #f7f7f7; }
.dvs .up { margin-top: 5px; }
.dvs .thumb { background: #cfcfcf; width: 11px; }
.dvs.t .thumb { height: 40px; margin-top: 30px; }
.dvs.t .down { margin-top: 31px; }
.dvs.l .thumb { height: 49px; margin-top: 4px; }
.dvs.l .down { margin-top: 86px; }
.dvs.p { width: 14px; background: #f0f0f0; margin-left: .5px; margin-top: -4px; }
.dvs.p .up { margin-top: 7px; }
.dvs.p .thumb { height: 45px; margin-top: 45px; width: 13px; }
.dvs.p .down { margin-top: 183px; }
.list { height: 173px; background: #fff; border: 1px solid #aaa; display: flex; flex-direction: column; overflow: hidden; }
.lbody { flex: 1; display: flex; min-height: 0; }
.lrows { flex: 1; min-width: 0; overflow: hidden; padding: 2px 0 0 3px; margin-right: 3px; }
.lr { height: 12.200px; display: flex; align-items: center; font-size: 9.500px; line-height: 12.200px; white-space: nowrap; color: #333; font-family: "Liberation Sans", "Noto Sans CJK SC", sans-serif; }
.li { width: 10px; height: 10px; margin-right: 1px; display: block; flex: none; }
.lhs { height: 14px; flex: none; display: flex; align-items: center; background: #f7f7f7; padding-left: 5px; }
.hth { width: 40px; height: 13px; background: #cfcfcf; margin-left: 6px; }
.lhs .right { margin-left: 58px; }
.dright { flex: 1; display: flex; min-width: 0; background: #fff; padding: 4px 0 0 4.500px; }
.cells { width: 328px; height: 288px; flex: none; display: grid; grid-template-columns: 162.500px 162.500px; grid-template-rows: 94px 93px 93px; column-gap: 3px; row-gap: 3.500px; background: #fff; }
.cell { width: 100%; height: 100%; display: block; background: #000; fill: none; stroke: #c8c8c8; stroke-width: .9; }
.cell.sel { background: #0b7cbd; stroke: #bfe0f3; }
.dstatus { flex: 1; display: flex; align-items: center; padding-left: 2px; font-size: 10px; line-height: 14px; white-space: nowrap; border-top: 1px solid #bbb; margin-top: 1px; font-family: "Liberation Sans", "Noto Sans CJK SC", sans-serif; }
.rec { width: 150px; } .pg { width: 65px; }

/* overlays */
.redbox { position: absolute; left: 265px; top: 159px; width: 198px; height: 110px; border: 4px solid #d4141c; }
.redarrow { position: absolute; left: 0; top: 0; width: 1000px; height: 577px; pointer-events: none; }
.wm { position: absolute; left: 765px; top: 477px; width: 180px; height: 85px; background: #1f3160; display: flex; align-items: center; padding-left: 14px; gap: 12px; }
.wmlogo { width: 36px; height: 36px; display: block; flex: none; }
.wmtext { display: flex; flex-direction: column; gap: 3px; }
.wmcn { font-size: 26px; line-height: 28px; color: #c9ced8; font-weight: 500; white-space: nowrap; }
.wmen { font-size: 10px; line-height: 12px; color: #8d99b2; letter-spacing: 1.200px; white-space: nowrap; font-family: "Liberation Sans", sans-serif; }
```
